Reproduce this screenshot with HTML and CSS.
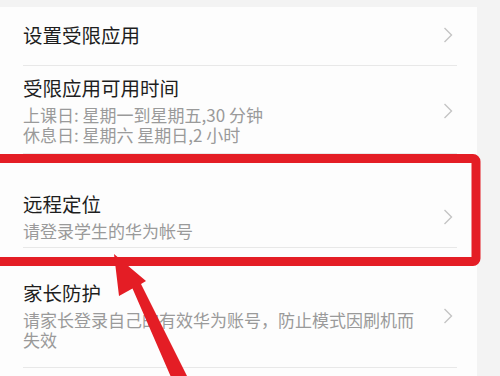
FILE: index.html
```html
<!DOCTYPE html>
<html lang="zh-CN">
<head>
<meta charset="utf-8">
<title>学生模式</title>
<link rel="stylesheet" href="styles.css">
</head>
<body>
<div class="page">
  <div class="card">
    <div class="row row-1">
      <div class="text">
        <div class="title">设置受限应用</div>
      </div>
      <svg class="chev" viewBox="0 0 10 16" width="10" height="16"><path d="M1.5 1 L8.5 8 L1.5 15" fill="none" stroke="#c4c4c4" stroke-width="1.4"/></svg>
    </div>
    <div class="sep"></div>
    <div class="row row-2">
      <div class="text">
        <div class="title">受限应用可用时间</div>
        <div class="sub">上课日: 星期一到星期五,30 分钟<br>休息日: 星期六 星期日,2 小时</div>
      </div>
      <svg class="chev" viewBox="0 0 10 16" width="10" height="16"><path d="M1.5 1 L8.5 8 L1.5 15" fill="none" stroke="#c4c4c4" stroke-width="1.4"/></svg>
    </div>
    <div class="sep"></div>
    <div class="row row-3">
      <div class="text">
        <div class="title">远程定位</div>
        <div class="sub">请登录学生的华为帐号</div>
      </div>
      <svg class="chev" viewBox="0 0 10 16" width="10" height="16"><path d="M1.5 1 L8.5 8 L1.5 15" fill="none" stroke="#c4c4c4" stroke-width="1.4"/></svg>
    </div>
    <div class="sep"></div>
    <div class="row row-4">
      <div class="text">
        <div class="title">家长防护</div>
        <div class="sub">请家长登录自己的有效华为账号，防止模式因刷机而失效</div>
      </div>
      <svg class="chev" viewBox="0 0 10 16" width="10" height="16"><path d="M1.5 1 L8.5 8 L1.5 15" fill="none" stroke="#c4c4c4" stroke-width="1.4"/></svg>
    </div>
    <div class="sep"></div>
    <div class="row row-5"></div>
  </div>
  <svg class="annot" viewBox="0 0 500 376" width="500" height="376">
    <rect x="-10" y="158.5" width="486" height="103" rx="3" ry="3" fill="none" stroke="#e41d25" stroke-width="9"/>
    <polygon points="114,254 146,281 141,284 189,380 174,384 132.5,288.5 119,296" fill="#e41d25"/>
  </svg>
</div>
</body>
</html>
```
FILE: styles.css
```css
html, body {
  margin: 0;
  padding: 0;
}
body {
  width: 500px;
  height: 376px;
  overflow: hidden;
  background: #f3f3f3;
  font-family: "Noto Sans CJK SC", "Noto Sans", sans-serif;
}
.page {
  position: relative;
  width: 500px;
  height: 376px;
  padding-top: 7px;
  box-sizing: border-box;
}
.card {
  width: 477px;
  background: #fdfdfd;
  height: 369px;
}
.row {
  display: flex;
  align-items: center;
  padding: 0 24px 0 23px;
}
.row-1 { padding-top: 16px; padding-bottom: 18px; }
.row-2 { padding-top: 10px; padding-bottom: 8px; }
.row-3 { padding-top: 38px; padding-bottom: 6px; }
.row-4 { padding-top: 33px; padding-bottom: 17px; }
.row-5 { height: 20px; }
.text {
  flex: 1;
  min-width: 0;
}
.title {
  font-size: 19.5px;
  line-height: 24px;
  color: #1e1e1e;
}
.sub {
  margin-top: 5px;
  font-size: 17px;
  line-height: 20px;
  color: #9a9a9a;
}
.chev {
  flex: none;
  margin-left: 20px;
  display: block;
}
.sep {
  height: 1px;
  background: #e8e8e8;
  margin: 0 20px 0 23px;
}
.annot {
  position: absolute;
  left: 0;
  top: 0;
  pointer-events: none;
}
```
